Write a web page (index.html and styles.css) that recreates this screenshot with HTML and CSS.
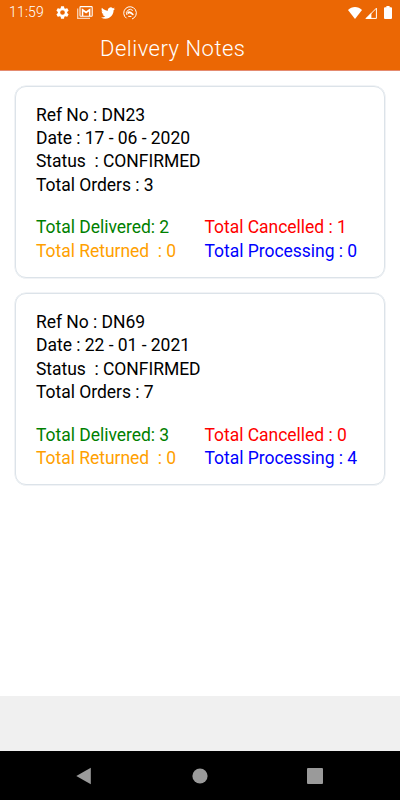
FILE: index.html
```html
<!DOCTYPE html>
<html lang="en">
<head>
<meta charset="utf-8">
<title>Delivery Notes</title>
<link rel="stylesheet" href="styles.css">
</head>
<body>
<div class="screen">
  <header class="header">
    <div class="status">
      <span class="clock">11:59</span>
      <div class="notifications">
        <svg class="gear" viewBox="2 2 20 20"><path d="M19.14 12.94c.04-.3.06-.61.06-.94s-.02-.64-.07-.94l2.03-1.58a.49.49 0 0 0 .12-.61l-1.92-3.32a.49.49 0 0 0-.59-.22l-2.39.96a7 7 0 0 0-1.62-.94l-.36-2.54a.48.48 0 0 0-.48-.41h-3.84a.48.48 0 0 0-.47.41l-.36 2.54c-.59.24-1.13.57-1.62.94l-2.39-.96a.48.48 0 0 0-.59.22L2.74 8.87a.48.48 0 0 0 .12.61l2.03 1.58a7 7 0 0 0 0 1.88l-2.03 1.58a.49.49 0 0 0-.12.61l1.92 3.32c.12.22.37.29.59.22l2.39-.96c.5.38 1.03.7 1.62.94l.36 2.54c.05.24.24.41.48.41h3.84c.24 0 .44-.17.47-.41l.36-2.54c.59-.24 1.13-.56 1.62-.94l2.39.96c.22.08.47 0 .59-.22l1.92-3.32a.48.48 0 0 0-.12-.61zM12 15.6a3.6 3.6 0 1 1 0-7.2 3.6 3.6 0 0 1 0 7.2z"/></svg>
        <svg class="mail" viewBox="0 0 16 13"><path class="soft" d="M.7 2.6v9.7H13"/><rect class="line" x="3" y=".6" width="12.2" height="9.7" rx=".8"/><path d="M4.800 10V2.200L9.100 5.300 13.400 2.200V10H11.900V5.400L9.100 7.500 6.300 5.400V10z"/></svg>
        <svg class="bird" viewBox="0 2 24 20"><path d="M23.953 4.57a10 10 0 01-2.825.775 4.958 4.958 0 002.163-2.723c-.951.555-2.005.959-3.127 1.184a4.92 4.92 0 00-8.384 4.482C7.69 8.095 4.067 6.13 1.64 3.162a4.822 4.822 0 00-.666 2.475c0 1.71.87 3.213 2.188 4.096a4.904 4.904 0 01-2.228-.616v.06a4.923 4.923 0 003.946 4.827 4.996 4.996 0 01-2.212.085 4.936 4.936 0 004.604 3.417 9.867 9.867 0 01-6.102 2.105c-.39 0-.779-.023-1.17-.067a13.995 13.995 0 007.557 2.209c9.053 0 13.998-7.496 13.998-13.985 0-.21 0-.42-.015-.63A9.935 9.935 0 0024 4.59z"/></svg>
        <svg class="ring" viewBox="0 0 14 14"><path class="thin" d="M3.600 12.300A6.300 6.300 0 1 1 9 13"/><path class="thin" d="M4 9A3.700 3.700 0 0 1 9.800 4.500"/><path d="M4.200 6.500C5.600 4.300 8 5 10.800 8.200L10 9.600 6.800 7.200 5 7.900z"/><path class="thin" d="M5.200 10.300 8.400 10.500"/></svg>
      </div>
      <div class="system">
        <svg class="wifi" viewBox="0 0 14 12"><path d="M7 12 0 3.1C3.8-.9 10.2-.9 14 3.1z"/></svg>
        <svg class="signal" viewBox="0 0 12 12"><path class="thin" d="M1.2 11.4 11.4 1.2V11.4z"/><path d="M.3 12 6.4 5.8V12z"/></svg>
        <svg class="battery" viewBox="0 0 8 13"><path d="M2.4 0h3.2v1.3H7a1 1 0 0 1 1 1V12a1 1 0 0 1-1 1H1a1 1 0 0 1-1-1V2.3a1 1 0 0 1 1-1h1.4z"/></svg>
      </div>
    </div>
    <h1 class="title">Delivery Notes</h1>
  </header>
  <main class="list">
    <section class="card">
      <p>Ref No : DN23</p>
      <p>Date : 17 - 06 - 2020</p>
      <p>Status  : CONFIRMED</p>
      <p>Total Orders : 3</p>
      <div class="totals">
        <p class="delivered">Total Delivered: 2</p>
        <p class="cancelled">Total Cancelled : 1</p>
        <p class="returned">Total Returned  : 0</p>
        <p class="processing">Total Processing : 0</p>
      </div>
    </section>
    <section class="card">
      <p>Ref No : DN69</p>
      <p>Date : 22 - 01 - 2021</p>
      <p>Status  : CONFIRMED</p>
      <p>Total Orders : 7</p>
      <div class="totals">
        <p class="delivered">Total Delivered: 3</p>
        <p class="cancelled">Total Cancelled : 0</p>
        <p class="returned">Total Returned  : 0</p>
        <p class="processing">Total Processing : 4</p>
      </div>
    </section>
  </main>
  <div class="bottom"></div>
  <nav class="navbar">
    <svg viewBox="0 0 16 18"><path d="M14.8.8v16.4L.3 9z"/></svg>
    <svg viewBox="0 0 16 18"><circle cx="8" cy="9" r="7.6"/></svg>
    <svg viewBox="0 0 16 18"><rect y="1" width="16" height="16" rx="1"/></svg>
  </nav>
</div>
</body>
</html>
```
FILE: styles.css
```css
* { box-sizing: border-box; margin: 0; padding: 0; }
body { font-family: Roboto, sans-serif; background: #fff; }
.screen { width: 400px; height: 800px; display: flex; flex-direction: column; overflow: hidden; }
svg { display: block; flex: none; fill: #fff; overflow: visible; }
.header { height: 71px; background: #eb6704; border-bottom: 1px solid #e48b70; color: #fff; }
.status { height: 25px; display: flex; align-items: center; padding: 0 8px 0 9px; }
.clock { width: 47px; font-size: 14px; font-weight: 300; letter-spacing: .2px; line-height: 25px; }
.notifications { display: flex; align-items: center; }
.gear { width: 13px; height: 13px; }
.mail { width: 16px; height: 13px; margin-left: 8px; }
.bird { width: 14px; height: 12px; margin-left: 8px; }
.ring { width: 14px; height: 14px; margin-left: 8px; }
.system { display: flex; align-items: center; margin-left: auto; }
.wifi { width: 14px; height: 12px; }
.signal { width: 12px; height: 12px; margin: 1px 7px 0 3px; }
.battery { width: 8px; height: 13px; }
.thin, .line, .soft { fill: none; stroke: #fff; }
.thin { stroke-width: 1; }
.line { stroke-width: 1.1; }
.soft { stroke-width: 1.3; opacity: .7; }
.title { margin: 10px 0 0 100px; font-size: 22px; line-height: 28px; font-weight: 300; letter-spacing: .5px; }
.list { height: 625px; padding: 14.6px 15px 0; display: flex; flex-direction: column; gap: 15.4px; }
.card { height: 192px; border: 1px solid #dce3e9; border-radius: 11px; box-shadow: 0 0 0 .5px #e3e8ed; padding: 17px 0 0 20px; font-size: 17.5px; line-height: 23.33px; letter-spacing: -.03px; color: #000; }
.card p { white-space: pre; }
.totals { display: grid; grid-template-columns: 168.5px 1fr; margin-top: 19.5px; }
.delivered { color: #008000; }
.cancelled { color: #f00; }
.returned { color: #ffa000; }
.processing { color: #00f; }
.bottom { height: 55px; background: #f0f0f0; }
.navbar { height: 49px; background: #000; display: flex; justify-content: space-between; padding: 16px 77px 0 76px; }
.navbar svg { width: 16px; height: 18px; fill: #9a9a9a; }
```
